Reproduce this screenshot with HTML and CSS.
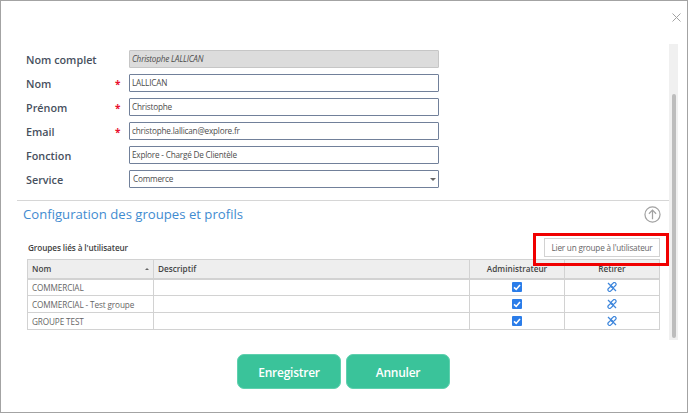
FILE: index.html
```html
<!DOCTYPE html>
<html lang="fr">
<head>
<meta charset="utf-8">
<title>Utilisateur</title>
<link rel="stylesheet" href="styles.css">
</head>
<body>
<svg class="defs" width="0" height="0">
  <symbol id="unlink" viewBox="0 0 10 10">
    <g fill="none" stroke="#3f87dc" stroke-width="1.200">
      <rect x="3.600" y="1.400" width="5.800" height="3.400" rx="1.700" transform="rotate(-45 6.500 3.100)"/>
      <rect x="0.600" y="5.200" width="5.800" height="3.400" rx="1.700" transform="rotate(-45 3.500 6.900)"/>
      <path d="M1 1l8 8"/>
    </g>
  </symbol>
  <symbol id="tick" viewBox="0 0 10 10">
    <path d="M2 5.300l2.200 2.100L8 2.900" fill="none" stroke="#fff" stroke-width="1.600"/>
  </symbol>
</svg>
<div class="modal">
  <div class="topbar">
    <svg class="close" width="9" height="9" viewBox="0 0 9 9"><path d="M.5.500l8 8M8.500.500l-8 8" stroke="#a3a3a3" fill="none"/></svg>
  </div>
  <div class="scrollarea">
    <div class="content">
      <form class="fields">
        <div class="row"><span class="label">Nom complet</span><span class="req"></span><div class="input disabled">Christophe LALLICAN</div></div>
        <div class="row"><span class="label">Nom</span><span class="req">*</span><div class="input">LALLICAN</div></div>
        <div class="row"><span class="label">Prénom</span><span class="req">*</span><div class="input">Christophe</div></div>
        <div class="row"><span class="label">Email</span><span class="req">*</span><div class="input">christophe.lallican@explore.fr</div></div>
        <div class="row"><span class="label">Fonction</span><span class="req"></span><div class="input">Explore - Chargé De Clientèle</div></div>
        <div class="row"><span class="label">Service</span><span class="req"></span><div class="input select">Commerce<i class="caret"></i></div></div>
      </form>
      <section class="section">
        <div class="section-head">
          <h2>Configuration des groupes et profils</h2>
          <svg width="17" height="17" viewBox="0 0 18 18" class="up"><circle cx="9" cy="9" r="8" fill="none" stroke="#a2a2a2" stroke-width="1.300"/><path d="M9 14V4.500M5.200 8.200L9 4.400l3.800 3.800" fill="none" stroke="#a2a2a2" stroke-width="1.300"/></svg>
        </div>
        <div class="groups-head">
          <h3>Groupes liés à l'utilisateur</h3>
          <button type="button" class="link-btn">Lier un groupe à l'utilisateur</button>
          <div class="highlight"></div>
        </div>
        <table>
          <colgroup><col class="c1"><col class="c2"><col class="c3"><col class="c4"></colgroup>
          <thead>
            <tr><th class="left"><span class="th-sort">Nom<i class="sort"></i></span></th><th class="left">Descriptif</th><th>Administrateur</th><th>Retirer</th></tr>
          </thead>
          <tbody>
            <tr><td>COMMERCIAL</td><td></td><td class="center"><span class="check"><svg width="10" height="10"><use href="#tick"/></svg></span></td><td class="center"><svg width="10" height="10"><use href="#unlink"/></svg></td></tr>
            <tr><td>COMMERCIAL - Test groupe</td><td></td><td class="center"><span class="check"><svg width="10" height="10"><use href="#tick"/></svg></span></td><td class="center"><svg width="10" height="10"><use href="#unlink"/></svg></td></tr>
            <tr><td>GROUPE TEST</td><td></td><td class="center"><span class="check"><svg width="10" height="10"><use href="#tick"/></svg></span></td><td class="center"><svg width="10" height="10"><use href="#unlink"/></svg></td></tr>
          </tbody>
        </table>
      </section>
    </div>
    <div class="scrollbar"><div class="thumb"></div></div>
  </div>
  <div class="actions">
    <button type="button" class="primary">Enregistrer</button>
    <button type="button" class="primary">Annuler</button>
  </div>
</div>
</body>
</html>
```
FILE: styles.css
```css
* { box-sizing: border-box; }
html, body { margin: 0; padding: 0; }
body {
  width: 688px;
  height: 413px;
  overflow: hidden;
  background: #fff;
  font-family: "Open Sans", "Noto Sans", sans-serif;
}
.defs { display: block; }
.modal {
  width: 688px;
  height: 413px;
  border: 1px solid #a3a3a3;
  background: #fff;
  display: flex;
  flex-direction: column;
}
.topbar {
  height: 43px;
  display: flex;
  justify-content: flex-end;
  align-items: flex-start;
  padding: 12px 6px 0 0;
}
.scrollarea {
  height: 296px;
  display: flex;
  padding-left: 16px;
  padding-right: 9px;
}
.content { width: 652px; }
.fields {
  height: 157px;
  padding: 6px 0 0 9px;
  display: flex;
  flex-direction: column;
  gap: 6px;
  border-bottom: 1px solid #d6d6d6;
}
.row { display: flex; align-items: center; height: 18px; }
.label {
  width: 88px;
  font-size: 10.800px;
  font-weight: 600;
  color: #47505e;
}
.req {
  width: 15px;
  padding-left: 1px;
  color: #e8112d;
  font-size: 10px;
  font-weight: 700;
  line-height: 10px;
  height: 9px;
}
.input {
  width: 310px;
  height: 18px;
  border: 1px solid #71809a;
  border-radius: 1px;
  padding-left: 2px;
  font-size: 8.200px;
  letter-spacing: -0.200px;
  line-height: 16px;
  color: #4d4d4d;
  position: relative;
  background: #fff;
}
.disabled {
  background: #dcdcdc;
  border-color: #c6c6c6;
  font-style: italic;
}
.select { padding-left: 3px; }
.caret {
  position: absolute;
  right: 2px;
  top: 7px;
  border: 3px solid transparent;
  border-top-color: #666;
  border-bottom-width: 0;
}
.section-head {
  height: 26px;
  display: flex;
  align-items: center;
  justify-content: space-between;
  padding: 0 8px 0 6px;
}
h2 {
  margin: 0;
  font-size: 13.150px;
  font-weight: 400;
  color: #3f8bd0;
}
.groups-head {
  height: 32px;
  padding-top: 8px;
  display: flex;
  align-items: center;
  justify-content: space-between;
  margin-left: 11px;
  position: relative;
}
h3 {
  margin: 0;
  font-size: 8.200px;
  font-weight: 600;
  letter-spacing: -0.100px;
  color: #3f3f3f;
}
.link-btn {
  width: 116px;
  height: 19px;
  margin-right: 9px;
  padding: 0;
  border: 1px solid #d2d2d2;
  background: #fff;
  color: #666;
  font: 8.200px "Open Sans", sans-serif;
  letter-spacing: -0.200px;
}
.highlight {
  position: absolute;
  right: 0;
  top: 6px;
  width: 136px;
  height: 33px;
  border: 3px solid #f00000;
}
table {
  width: 632px;
  margin-left: 10px;
  border-collapse: collapse;
  table-layout: fixed;
  font-size: 8.200px;
}
.c1 { width: 126px; }
.c2 { width: 316px; }
.c3 { width: 95px; }
.c4 { width: 95px; }
th, td { border: 1px solid #d2d2d2; padding: 0 4px; }
th {
  height: 19px;
  background: #eeeeee;
  border-bottom-width: 2px;
  color: #444;
  font-weight: 600;
}
th.left { text-align: left; }
td {
  height: 17px;
  color: #666;
  white-space: nowrap;
  letter-spacing: -0.120px;
}
.center { text-align: center; padding: 0; line-height: 0; }
.th-sort { display: flex; justify-content: space-between; align-items: center; }
.sort {
  border: 2.500px solid transparent;
  border-bottom-color: #666;
  border-top-width: 0;
}
.check {
  display: inline-flex;
  width: 10px;
  height: 10px;
  background: #2b7de9;
  border-radius: 1px;
  align-items: center;
  justify-content: center;
}
.scrollbar {
  width: 9px;
  background: #f0f0f0;
  padding: 50px 2px 2px 3px;
}
.thumb {
  width: 4px;
  height: 244px;
  background: #bdbdbd;
  border-radius: 2px;
}
.actions {
  display: flex;
  justify-content: center;
  gap: 5px;
  padding: 14px 0 0 0;
  margin-left: -1px;
}
.primary {
  width: 104px;
  height: 35px;
  padding: 1px 0 0;
  border: 1px solid #5fd0ae;
  border-radius: 7px;
  background: #3ac39a;
  color: #fff;
  font: 600 12px "Open Sans", sans-serif;
  letter-spacing: -0.250px;
}
```
